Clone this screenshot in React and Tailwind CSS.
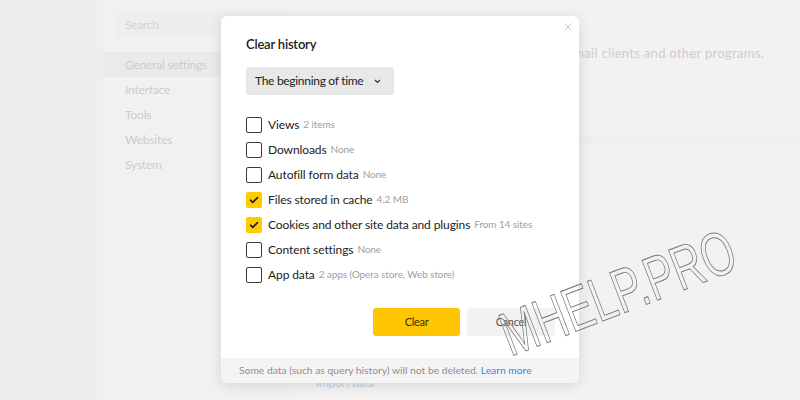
import { useState } from 'react'

const items = [
  { label: 'Views', note: '2 items', checked: false },
  { label: 'Downloads', note: 'None', checked: false },
  { label: 'Autofill form data', note: 'None', checked: false },
  { label: 'Files stored in cache', note: '4.2 MB', checked: true },
  { label: 'Cookies and other site data and plugins', note: 'From 14 sites', checked: true },
  { label: 'Content settings', note: 'None', checked: false },
  { label: 'App data', note: '2 apps (Opera store, Web store)', checked: false },
]

function Checkbox({ checked }) {
  if (checked) {
    return (
      <div className="w-4 h-4 rounded-[2px] bg-[#ffcc00] flex items-center justify-center shrink-0">
        <svg className="w-[10px] h-[10px]" viewBox="0 0 10 10" fill="none">
          <path d="M1.5 5.2l2.3 2.2L8.5 2.6" stroke="#1a1a1a" strokeWidth="1.6" strokeLinecap="round" strokeLinejoin="round" />
        </svg>
      </div>
    )
  }
  return <div className="w-4 h-4 rounded-[2px] border-[1.5px] border-[#3a3a3a] bg-white shrink-0" />
}

export default function App() {
  const [rows] = useState(items)

  return (
    <div className="relative w-[800px] h-[400px] overflow-hidden bg-[#f0efef] font-['Lato','Noto_Sans',sans-serif] tracking-[-0.3px]">
      {/* dimmed settings page */}
      <div className="flex h-full">
        <div className="w-[103px] bg-[#efeeee]" />
        <div className="w-[187px] bg-[#f2f1f1] pt-[12px]">
          <div className="mx-[13px] h-[26px] bg-[#efeeee] pl-[9px] flex items-center text-[12px] text-[#d4d2d2]">Search</div>
          <div className="mt-[14px] flex flex-col text-[12px] text-[#cdcbcb] tracking-[-0.2px]">
            <div className="h-[25px] bg-[#ebeaea] pl-[22px] flex items-center">General settings</div>
            <div className="h-[25px] pl-[22px] flex items-center">Interface</div>
            <div className="h-[25px] pl-[22px] flex items-center">Tools</div>
            <div className="h-[25px] pl-[22px] flex items-center">Websites</div>
            <div className="h-[25px] pl-[22px] flex items-center">System</div>
          </div>
        </div>
        <div className="flex-1 bg-[#f3f1f2] flex flex-col">
          <div className="h-[135px] pt-[44px] pr-[36px] text-right text-[13px] text-[#cfcdcd] tracking-[0.3px]">
            s, email clients and other programs.
          </div>
          <div className="h-[8px] bg-[#efeeee]" />
          <div className="h-[42px] border-b border-[#eeeded]" />
          <div className="flex-1" />
          <div className="pl-[26px] pb-[8px] text-[12px] text-[#c4cde0]">Import data</div>
        </div>
      </div>

      {/* modal */}
      <div className="absolute left-[221px] top-[16px] w-[358px] h-[367px] bg-white rounded-[6px] shadow-[0_2px_14px_rgba(0,0,0,0.12)] overflow-hidden flex flex-col">
        <button className="absolute right-[3px] top-[3px] w-4 h-4 flex items-center justify-center">
          <svg className="w-[8px] h-[8px]" viewBox="0 0 8 8">
            <path d="M0.5 0.5l7 7M7.5 0.5l-7 7" stroke="#c8c8c8" strokeWidth="1" />
          </svg>
        </button>
        <div className="flex-1 pl-[25px] pr-[24px] pt-[19px]">
          <div className="text-[13px] font-semibold text-[#1c1c1c] leading-[18px] tracking-[-0.2px]">Clear history</div>
          <button className="mt-[14px] h-[28px] pl-[9px] pr-[13px] rounded-[3px] bg-[#e8e8e8] flex items-center gap-[11px] text-[12px] text-[#222]">
            The beginning of time
            <svg className="w-[7px] h-[5px]" viewBox="0 0 7 5" fill="none">
              <path d="M1 1l2.5 2.5L6 1" stroke="#333" strokeWidth="1.2" />
            </svg>
          </button>
          <div className="mt-[17px] flex flex-col">
            {rows.map((r) => (
              <div key={r.label} className="h-[25px] flex items-center">
                <Checkbox checked={r.checked} />
                <span className="ml-[6px] text-[12px] text-[#222] tracking-[-0.1px]">{r.label}</span>
                <span className="ml-[4px] text-[10px] text-[#a0a0a0] tracking-[-0.1px]">{r.note}</span>
              </div>
            ))}
          </div>
          <div className="mt-[21px] flex justify-end gap-[7px]">
            <button className="w-[87px] h-[28px] rounded-[3px] bg-[#ffc500] text-[11px] text-[#3a3000]">Clear</button>
            <button className="w-[88px] h-[28px] rounded-[3px] bg-[#f2f2f2] text-[11px] text-[#555]">Cancel</button>
          </div>
        </div>
        <div className="h-[25px] bg-[#f5f4f4] pl-[18px] flex items-center text-[10.3px] text-[#8e8e8e] tracking-[0px]">
          Some data (such as query history) will not be deleted.&nbsp;<span className="text-[#2e8be0]">Learn more</span>
        </div>
      </div>

      {/* watermark */}
      <div className="absolute left-[514px] top-[304px] origin-[0_100%] [transform:rotate(-21deg)_scaleX(0.69)] text-[62px] leading-none font-['Liberation_Sans',sans-serif] tracking-normal text-transparent [-webkit-text-stroke:1px_#7a7a7a]">
        MHELP.PRO
      </div>
    </div>
  )
}
